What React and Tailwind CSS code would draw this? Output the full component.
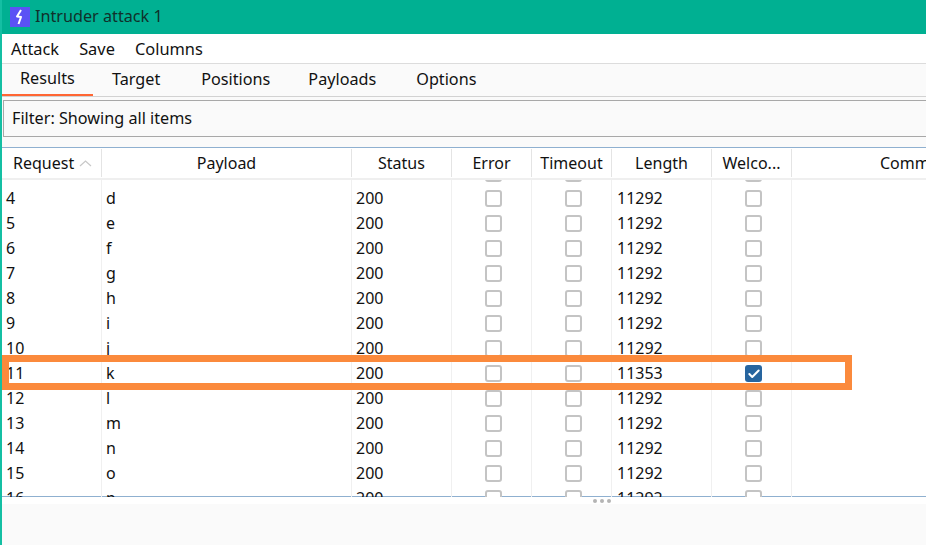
import { Check } from "lucide-react";

const columns = [
  { name: "Payload", width: "w-[250px]" },
  { name: "Status", width: "w-[100px]" },
  { name: "Error", width: "w-[80px]" },
  { name: "Timeout", width: "w-[80px]" },
  { name: "Length", width: "w-[100px]" },
  { name: "Welco...", width: "w-[80px]" },
];

const rows = [
  ["3", "c", "11292"],
  ["4", "d", "11292"],
  ["5", "e", "11292"],
  ["6", "f", "11292"],
  ["7", "g", "11292"],
  ["8", "h", "11292"],
  ["9", "i", "11292"],
  ["10", "j", "11292"],
  ["11", "k", "11353", true],
  ["12", "l", "11292"],
  ["13", "m", "11292"],
  ["14", "n", "11292"],
  ["15", "o", "11292"],
  ["16", "p", "11292"],
];

function Box({ checked }) {
  if (checked)
    return (
      <span className="w-[17px] h-[17px] rounded-[3px] bg-[#27659f] flex items-center justify-center">
        <Check size={14} strokeWidth={3.5} color="#ffffff" />
      </span>
    );
  return <span className="w-[17px] h-[17px] rounded-[3px] border-2 border-[#c4c4c4] bg-white" />;
}

function Row({ row }) {
  const [num, payload, length, checked] = row;
  return (
    <div className="flex h-[25px] items-center shrink-0">
      <div className="w-[100px] shrink-0 h-full pl-[4px] pb-[2px] flex items-center border-r border-[#f0f0f0]">{num}</div>
      <div className="w-[250px] shrink-0 h-full pl-[4px] pb-[2px] flex items-center border-r border-[#f0f0f0]">{payload}</div>
      <div className="w-[100px] shrink-0 h-full pl-[4px] pb-[2px] flex items-center border-r border-[#f0f0f0]">200</div>
      <div className="w-[80px] shrink-0 h-full pl-[4px] flex items-center justify-center border-r border-[#f0f0f0]"><Box /></div>
      <div className="w-[80px] shrink-0 h-full pl-[4px] flex items-center justify-center border-r border-[#f0f0f0]"><Box /></div>
      <div className="w-[100px] shrink-0 h-full pl-[5px] pb-[2px] flex items-center border-r border-[#f0f0f0]">{length}</div>
      <div className="w-[80px] shrink-0 h-full pl-[4px] flex items-center justify-center border-r border-[#f0f0f0]"><Box checked={checked} /></div>
    </div>
  );
}

export default function App() {
  return (
    <div className="relative w-[926px] h-[545px] overflow-hidden bg-[#fafafa] text-[16px] leading-[22px] text-[#111] font-['Noto_Sans','Open_Sans',sans-serif] border-l-2 border-[#14bfa3]">
      <header className="h-[34px] -ml-[2px] bg-[#00b092] flex items-center pl-[10px]">
        <span className="w-[20px] h-[20px] bg-[#5b52f5] flex items-center justify-center">
          <svg width="12" height="16" viewBox="0 0 12 16">
            <path d="M7 1 L3 7.5 L7 8 L4.5 15" fill="none" stroke="#ffffff" strokeWidth="2" strokeLinejoin="round" />
          </svg>
        </span>
        <span className="ml-[5px] pb-[2px] text-[#10302b] text-[16.2px]">Intruder attack 1</span>
      </header>

      <nav className="h-[29px] bg-white flex items-center gap-[20px] pl-[9px] border-b border-[#dcdcdc] box-content text-[16.4px]">
        <span>Attack</span>
        <span>Save</span>
        <span>Columns</span>
      </nav>

      <div className="h-[33px] flex border-b border-[#d2d2d2] text-[16.2px]">
        <div className="w-[91px] h-[32px] pl-[18px] pb-[2px] flex items-center border-b-2 border-[#ff6633]">Results</div>
        <div className="pl-[19px] pb-[2px] flex items-center">Target</div>
        <div className="pl-[41px] pb-[2px] flex items-center">Positions</div>
        <div className="pl-[38px] pb-[2px] flex items-center">Payloads</div>
        <div className="pl-[40px] pb-[2px] flex items-center">Options</div>
      </div>

      <div className="h-[37px] mt-[3px] ml-[1px] pl-[8px] pb-[2px] flex items-center border border-r-0 border-[#a8a8a8] bg-[#fafafa] text-[16.2px]">
        Filter: Showing all items
      </div>

      <div className="mt-[10px] h-[350px] bg-white border-t border-[#8fb0d0] flex flex-col overflow-hidden">
        <div className="h-[32px] shrink-0 flex items-center border-b-2 border-[#efefef]">
          <div className="w-[100px] shrink-0 h-[28px] pl-[11px] flex items-center gap-[5px] border-r border-[#e4e4e4]">
            Request
            <svg width="13" height="7" viewBox="0 0 13 7">
              <path d="M1 6 L6.5 1 L12 6" fill="none" stroke="#c8c8c8" strokeWidth="1.2" />
            </svg>
          </div>
          {columns.map((col) => (
            <div key={col.name} className={`${col.width} shrink-0 h-[28px] flex items-center justify-center whitespace-nowrap border-r border-[#e4e4e4]`}>
              {col.name}
            </div>
          ))}
          <div className="shrink-0 pl-[88px] whitespace-nowrap">Comment</div>
        </div>
        <div className="h-[317px] overflow-hidden">
          <div className="-mt-[19px] flex flex-col">
            {rows.map((row) => (
              <Row key={row[0]} row={row} />
            ))}
          </div>
        </div>
      </div>

      <div className="h-[7px] bg-white border-t border-[#8fb0d0] box-content flex justify-center -mt-[1px]">
        <span className="flex gap-[3px] mt-[2px] ml-[276px] h-[4px]">
          <i className="w-[4px] h-[4px] rounded-full bg-[#b4b4b4]" />
          <i className="w-[4px] h-[4px] rounded-full bg-[#b4b4b4]" />
          <i className="w-[4px] h-[4px] rounded-full bg-[#b4b4b4]" />
        </span>
      </div>

      <div className="absolute left-0 top-[355px] w-[850px] h-[35px] border-[7px] border-[#fb8a3c]" />
    </div>
  );
}
